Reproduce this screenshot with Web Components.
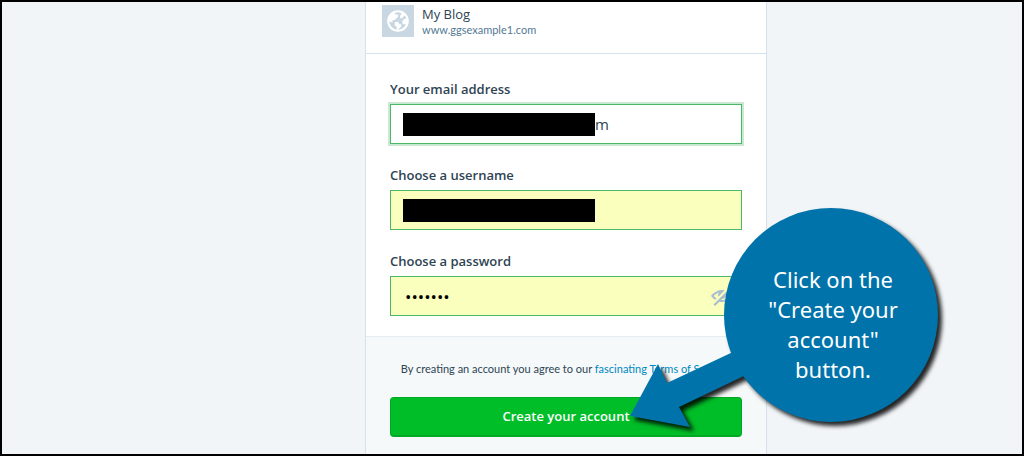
<!DOCTYPE html>
<html lang="en">
<head>
<meta charset="utf-8">
<meta name="viewport" content="width=device-width, initial-scale=1">
<title>Create your account</title>
<style>
  body {
    margin: 0;
    font-family: "Open Sans", "Noto Sans", sans-serif;
    color: #2e4453;
    --small-font: Lato, "Open Sans", sans-serif;
  }
</style>
</head>
<body>
<signup-page>
  <signup-card>
    <site-summary slot="header" name="My Blog" domain="www.ggsexample1.com"></site-summary>
    <form-field label="Your email address" type="email" value="m" masked active></form-field>
    <form-field label="Choose a username" type="text" masked filled></form-field>
    <form-field label="Choose a password" type="password" value="example" filled></form-field>
    <terms-note slot="footer"></terms-note>
    <submit-button slot="footer">Create your account</submit-button>
    <call-out slot="overlay">Click on the "Create your account" button.</call-out>
  </signup-card>
</signup-page>

<script>
const define = (name, markup) => {
  customElements.define(name, class extends HTMLElement {
    constructor() {
      super()
      this.attachShadow({ mode: 'open' }).innerHTML = markup
    }
  })
}

class SiteSummary extends HTMLElement {
  constructor() {
    super()
    this.attachShadow({ mode: 'open' })
  }

  connectedCallback() {
    this.shadowRoot.innerHTML = `
      <style>
        :host {
          display: flex;
          gap: 8px;
          padding: 3px 16px 16px;
        }

        .icon {
          display: grid;
          place-items: center;
          width: 32px;
          height: 32px;
          background: #c8d7e1;
        }

        svg {
          width: 26px;
          height: 26px;
          fill: #fff;
        }

        .name {
          font-size: 13px;
          line-height: 18px;
        }

        .domain {
          font-family: var(--small-font);
          font-size: 11px;
          line-height: 14px;
          color: #537994;
        }
      </style>
      <div class="icon">
        <svg viewBox="0 0 24 24" aria-hidden="true"><path d="M12 2C6.477 2 2 6.477 2 12s4.477 10 10 10 10-4.477 10-10S17.523 2 12 2zm0 18l2-2 1-1v-2h-2v-1l-1-1H9v3l2 2v1.93c-3.94-.494-7-3.858-7-7.93l1 1h2v-2h2l3-3V6h-2L9 5v-.41C9.927 4.21 10.94 4 12 4s2.073.212 3 .59V6l-1 1v2l1 1 3.13-3.13c.752.897 1.304 1.964 1.606 3.13H18l-2 2v2l1 1h2l.286.286C18.03 18.06 15.24 20 12 20z"/></svg>
      </div>
      <div>
        <div class="name">${this.getAttribute('name')}</div>
        <div class="domain">${this.getAttribute('domain')}</div>
      </div>
    `
  }
}

class FormField extends HTMLElement {
  constructor() {
    super()
    this.attachShadow({ mode: 'open' })
  }

  connectedCallback() {
    const type = this.getAttribute('type') || 'text'
    const value = this.getAttribute('value') || ''
    const mask = this.hasAttribute('masked') ? '<span class="mask"></span>' : ''
    const toggle = type === 'password' ? `
      <button type="button" aria-label="Show password">
        <svg viewBox="0 0 24 24" aria-hidden="true"><path d="M1 12s4.188-6 11-6c.947 0 1.839.121 2.678.322L8.36 12.64A4 4 0 0 1 8 11c0-.937.335-1.787.875-2.463C6.483 9.344 4.66 10.915 3.62 12a12.13 12.13 0 0 0 3.017 2.364l-1.462 1.462C2.541 14.196 1 12 1 12zm22 0s-4.188 6-11 6c-.946 0-1.836-.124-2.676-.323L5 22l-1.5-1.5 17-17L22 5l-3.147 3.147C21.464 9.776 23 12 23 12zm-2.615.006a12.3 12.3 0 0 0-3.02-2.375l-1.43 1.43A4 4 0 0 1 12 15l-.947.947c.31.031.624.053.947.053 3.978 0 6.943-2.478 8.385-3.994z"/></svg>
      </button>` : ''

    this.shadowRoot.innerHTML = `
      <style>
        :host {
          display: block;
          margin-bottom: 20px;
        }

        label {
          display: block;
          margin-bottom: 3px;
          font-size: 13px;
          font-weight: 600;
          line-height: 23px;
        }

        .box {
          position: relative;
        }

        input {
          display: block;
          box-sizing: border-box;
          width: 100%;
          height: 40px;
          padding: 0 14px;
          border: 1px solid #4ab866;
          border-radius: 0;
          outline: none;
          background: #fff;
          color: inherit;
          font-family: inherit;
          font-size: 15px;
        }

        input[type="password"] {
          color: #000;
          font-size: 17px;
        }

        :host([masked]) input {
          padding-left: 204px;
        }

        :host([active]) input {
          box-shadow: 0 0 0 2px #c9e9d1;
        }

        :host([filled]) input {
          background: #faffbd;
        }

        .mask {
          position: absolute;
          top: 9px;
          left: 13px;
          width: 192px;
          height: 23px;
          background: #000;
        }

        button {
          position: absolute;
          top: 8px;
          right: 8px;
          padding: 0;
          border: 0;
          background: none;
          cursor: pointer;
        }

        svg {
          display: block;
          width: 24px;
          height: 24px;
          fill: #a8bece;
        }
      </style>
      <label for="control">${this.getAttribute('label')}</label>
      <div class="box">
        <input id="control" type="${type}" value="${value}">
        ${mask}
        ${toggle}
      </div>
    `
  }
}

define('signup-page', `
  <style>
    :host {
      display: grid;
      grid-template-columns: 363fr minmax(0, 402px) 255fr;
      box-sizing: border-box;
      min-height: 100vh;
      border: 2px solid #000;
      background: #f1f5f8;
      overflow: hidden;
    }

    ::slotted(*) {
      grid-column: 2;
    }
  </style>
  <slot></slot>
`)

define('signup-card', `
  <style>
    :host {
      display: flex;
      flex-direction: column;
      position: relative;
      border: solid #d5e2eb;
      border-width: 0 1px;
      background: #fff;
    }

    header {
      border-bottom: 1px solid #d5e2eb;
    }

    form {
      display: flex;
      flex: 1;
      flex-direction: column;
    }

    .fields {
      padding: 24px 24px 0;
    }

    .footer {
      flex: 1;
      padding: 24px 24px 16px;
      border-top: 1px solid #e4edf2;
      background: #f5f9fa;
    }
  </style>
  <header><slot name="header"></slot></header>
  <form>
    <div class="fields"><slot></slot></div>
    <div class="footer"><slot name="footer"></slot></div>
  </form>
  <slot name="overlay"></slot>
`)

define('terms-note', `
  <style>
    :host {
      display: block;
      margin-bottom: 20px;
      font-family: var(--small-font);
      font-size: 11px;
      line-height: 16px;
      text-align: center;
    }

    a {
      color: #0087be;
      text-decoration: none;
    }
  </style>
  By creating an account you agree to our <a href="#terms">fascinating Terms of Service</a>.
`)

define('submit-button', `
  <style>
    :host {
      display: block;
    }

    button {
      width: 100%;
      height: 40px;
      padding: 0 0 2px;
      border: 1px solid #00a823;
      border-bottom-width: 2px;
      border-radius: 4px;
      background: #00be28;
      color: #fff;
      font-family: inherit;
      font-size: 13px;
      font-weight: 600;
      cursor: pointer;
    }
  </style>
  <button type="submit"><slot></slot></button>
`)

// The bubble lies over the card; its arrow points at the submit button.
define('call-out', `
  <style>
    :host {
      position: absolute;
      right: -172px;
      bottom: 32px;
      display: grid;
      place-items: center end;
      width: 308px;
      height: 214px;
      color: #fff;
      font-family: "Noto Sans", "Open Sans", sans-serif;
      font-size: 22px;
      line-height: 30px;
      text-align: center;
    }

    svg {
      grid-area: 1 / 1;
      width: 308px;
      height: 214px;
      overflow: visible;
      fill: #0073aa;
      filter: drop-shadow(4px 4px 2px rgba(0, 0, 0, 0.85));
    }

    p {
      z-index: 1;
      grid-area: 1 / 1;
      box-sizing: border-box;
      width: 214px;
      margin: 0;
      padding: 18px 34px 0 38px;
    }
  </style>
  <svg viewBox="0 0 308 214" aria-hidden="true">
    <circle cx="201" cy="107" r="107"/>
    <path d="M103 144L37 175 28 156 0 208 60 219 49 199 118 166z"/>
  </svg>
  <p><slot></slot></p>
`)

customElements.define('site-summary', SiteSummary)
customElements.define('form-field', FormField)
</script>
</body>
</html>
